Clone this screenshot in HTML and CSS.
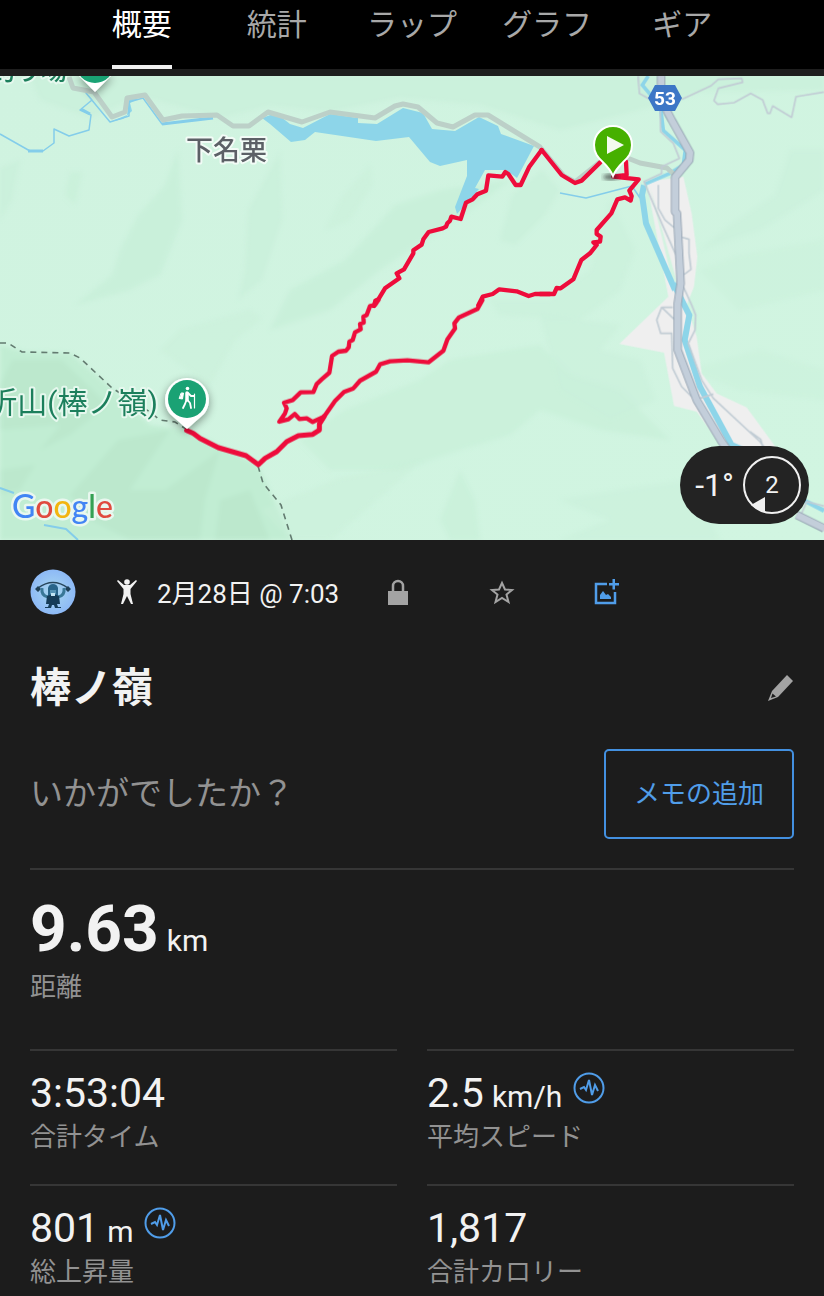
FILE: index.html
```html
<!DOCTYPE html>
<html lang="ja">
<head>
<meta charset="utf-8">
<meta name="viewport" content="width=device-width, initial-scale=1">
<title>棒ノ嶺</title>
<link rel="stylesheet" href="styles.css">
</head>
<body>
<header class="topbar">
  <nav class="tabs">
    <a class="tab tab-active" href="#summary" aria-current="page">概要</a>
    <a class="tab" href="#stats">統計</a>
    <a class="tab" href="#laps">ラップ</a>
    <a class="tab" href="#charts">グラフ</a>
    <a class="tab" href="#gear">ギア</a>
  </nav>
</header>
<main>
  <section class="map">
    <svg class="map-canvas" viewBox="0 76 824 464" preserveAspectRatio="xMidYMid slice">
      <defs>
        <linearGradient id="land" x1="0" y1="0" x2="1" y2="1">
          <stop offset="0" stop-color="#d0f3e0"/><stop offset="1" stop-color="#d1f5e1"/>
        </linearGradient>
        <filter id="soft"><feGaussianBlur stdDeviation="2"/></filter>
        <filter id="drop" x="-30%" y="-30%" width="160%" height="160%"><feDropShadow dx="0" dy="3" stdDeviation="4" flood-opacity=".4"/></filter>
      </defs>
      <rect y="76" width="824" height="464" fill="url(#land)"/>
      <g fill="#c9f0da" filter="url(#soft)">
        <path d="M30 76H824V90L700 92 640 110 560 130 480 105 400 98 330 112 270 106 220 118 140 96 90 118 40 100Z" opacity=".7"/>
        <path d="M178 150 165 185 138 215 120 250 112 275 75 305 130 290 160 275 182 220Z"/>
        <path d="M280 152 248 210 245 270 238 300 262 280 282 220Z" opacity=".7"/>
        <path d="M70 172 65 195 75 205 82 172Z" opacity=".8"/>
        <path d="M0 168 20 160 12 200 0 220Z" opacity=".7"/>
        <path d="M440 190 395 205 345 260 290 290 270 330 330 310 380 270 425 240 470 210 510 180Z"/>
        <path d="M370 165 340 200 325 230 350 220 372 185Z" opacity=".5"/>
        <path d="M542 170 512 195 500 240 515 245 545 215 560 190Z" opacity=".7"/>
        <path d="M610 200 590 270 550 300 490 300 500 315 580 320 620 290 635 250Z" opacity=".6"/>
        <path d="M790 150 775 195 730 225 700 250 760 230 800 205 824 190V150Z" opacity=".6"/>
        <path d="M700 270 740 255 824 240V290L740 310Z" opacity=".4"/>
        <path d="M420 380 450 360 540 345 570 375 620 390 670 440 600 430 540 410 510 435 460 450 400 470 330 470 300 440 345 410Z" opacity=".8"/>
        <path d="M540 315 620 325 600 350 640 360 655 400 610 420 560 390Z" opacity=".6"/>
        <path d="M460 470 440 520 450 540H480L475 500Z" opacity=".8"/>
        <path d="M560 500 620 490 690 480 720 540H560L610 520Z" opacity=".6"/>
        <path d="M690 370 760 350 824 370V400L740 390Z" opacity=".4"/>
        <path d="M180 330 160 350 210 385 235 340 262 318 250 310Z" opacity=".5"/>
      </g>
      <g filter="url(#soft)">
        <path fill="#c1edd3" d="M0 345 25 352 70 353 100 378 150 425 188 430 258 465 292 540H0Z"/>
        <path fill="#b9e6cb" d="M12 360 62 360 108 405 70 435 40 450 60 425 0 430V385ZM70 495 118 440 170 430 130 490 165 490 220 450 205 500 200 540H130L90 520ZM0 470 35 465 20 490 0 495ZM220 500 250 490 270 540H215Z" opacity=".75"/>
        <path fill="#c9efd9" d="M262 510 340 478 420 462 330 540H290Z" opacity=".5"/>
      </g>

      <g transform="translate(540 70) scale(.333333)">
        <path fill="#efefef" d="M320 335 430 320 455 430 472 560 462 650 440 705 470 800 485 910 530 970 620 1012 710 1135 560 1150 470 1025 402 1008 372 848 238 822 385 680Z"/>
        <path fill="#d3f4e1" d="M330 350 412 640 395 625Z"/>
      </g>
      <g fill="#8dd5e9">
        <path d="M262 118 276 113 290 124 303 128 330 114 358 118V123L377 124 403 108 423 113 432 129 455 131 479 117 498 126 501 134 534 146 517 178 506 170 485 170 475 188 479 189 457 214 455 207 467 176V160L440 166 430 162 409 137 376 141 315 132 305 140 291 142 270 124Z"/>
        <path d="M110 122 127 115 129 98 138 99 130 103 132 111 123 119Z"/>
      </g>
      <g fill="none" stroke="#84cdea" stroke-linejoin="round">
        <path d="M0 134 30 151H43L54 143V129L69 136 89 130 91 115 80 110 92 100 86 93 110 122 129 116V102L143 98 162 124 213 118" stroke-width="1.5"/>
        <path d="M162 124 213 118M28 151H43M81 109 90 114" stroke-width="3"/>
        <path d="M560 193 586 198 632 186 640 198" stroke-width="1.5"/>
        <path d="M0 488 14 493M44 525 66 529 78 540" stroke-width="2"/>
      </g>
      <g fill="none" stroke="#8dd5e9" transform="translate(540 70) scale(.333333)">
        <path d="M325 18 307 45 345 90 362 115 370 182 436 240 430 285 390 310 315 342" stroke-width="11"/>
        <path d="M312 345 306 375 318 460 405 660" stroke-width="18"/>
        <path d="M400 640 448 735 434 810 480 950 575 1125 610 1140" stroke-width="18"/>
        <path d="M780 1285 852 1322" stroke-width="13"/>
      </g>
      <path d="M69 77 73 88 94 92 112 117 125 112 127 98 145 95 163 120 182 116 217 115 233 126H249L268 112 302 122 330 112 375 118 395 106 403 104 418 107 437 123 453 127 475 115H488L540 147 564 176 575 182 600 162 620 155 640 163 667 168 677 177" fill="none" stroke="#bcd0c8" stroke-width="5" stroke-linejoin="round"/>
      <g fill="none" stroke="#c1ccd4" transform="translate(540 70) scale(.333333)" stroke-linejoin="round">
        <path d="M295 18 298 70 360 105 362 185 400 220 418 265 365 290V310L312 335 365 460 408 555M355 345V415L375 450 405 475M420 500 447 508V550L453 598 430 615M430 650 455 705 467 735 465 780 445 820 485 930 520 985 660 1115 710 1180M630 1085 662 1108 668 1130M480 985 520 972M405 750 365 712 350 750 362 790H395L398 895 425 950 460 985M368 712H398" stroke-width="5"/>
        <path d="M425 88 512 48 535 28 605 25 608 37 535 55 522 92 533 103 582 98 632 70 668 90 683 130H690L698 108 755 142 768 80 852 66M785 1330 800 1295 852 1308" stroke-width="5"/>
        <path d="M363 18V55C368 100 380 125 395 150L450 248 448 270 405 322V425L411 430 422 640 413 700V840L470 990 545 1115 570 1150M770 1335 852 1375" stroke="#919fae" stroke-width="25"/>
        <path d="M363 15V55C368 100 380 125 395 150L450 248 448 270 405 322V425L411 430 422 640 413 700V840L470 990 545 1115 570 1150M770 1335 855 1376" stroke="#c3ceda" stroke-width="20"/>
      </g>
      <g fill="none" stroke="#637b70" stroke-width="1.6" stroke-dasharray="6 5">
        <path d="M0 343 8 343 22 352 70 353 80 358 112 388 150 412 160 420 175 422 186 429M258 466 263 483 281 505 292 540"/>
      </g>

      <g fill="none" stroke="#ee0c3b" stroke-width="13" stroke-linejoin="round" stroke-linecap="round">
        <g transform="translate(270 70) scale(.333333)">
          <path d="M815 240 778 290 752 345H737L715 312 706 306 697 320 655 316 648 362 622 373 608 388 588 398 572 447 544 440 540 452 532 460 528 470 518 475 476 486 460 508 455 524 430 541V550L402 598 380 610 388 625 345 655 325 688 316 692 312 708M625 706 638 680 668 672 688 658 740 664 776 678 795 672H840"/>
        </g>
        <g transform="translate(540 70) scale(.333333)">
          <path d="M5 240 65 315 105 339 125 332 180 278M258 275 260 315 220 320 296 328 268 362 275 378 272 392 255 382 232 388 214 430 170 480V492L182 500 180 515 160 517 170 525 150 550 124 570 100 628 62 655 50 654 42 672H0"/>
        </g>
        <g transform="translate(270 300) scale(.333333)">
          <path d="M325 0 315 15 300 18 290 45 280 50 281 68 270 72 272 88 255 97 248 120 238 125 236 142 228 152 205 155 186 168 178 218 155 238 140 252 130 276 92 277 68 300 42 308 50 325 45 340 28 365 55 358 74 342 88 357 110 355 128 366 162 350M637 0 622 27 567 52 553 70 555 85 532 118 520 152 475 187 412 181 360 184 330 193 318 215 270 242 250 265 222 276 195 303 162 350 148 372"/>
          <path d="M162 350 148 372V390L128 403 85 407 50 425 20 455-15 475-35 494-72 467-155 443-210 415-230 400-250 391" stroke-width="15"/>
        </g>
      </g>

      <g filter="url(#drop)" fill="#fff">
        <path d="M187 429 170 414A22 22 0 1 1 204 414Z"/>
        <path d="M95 92 77 74H113Z"/>
      </g>
      <circle cx="187" cy="399" r="19" fill="#1aa274"/>
      <circle cx="95" cy="64" r="19" fill="#1aa274"/>
      <g fill="none" stroke="#fff" stroke-linecap="round" stroke-linejoin="round">
        <circle cx="187.500" cy="388.500" r="1.800" fill="#fff" stroke="none"/>
        <path d="M187 393V400" stroke-width="3.500"/>
        <path d="M186.500 400 185 404 183 408M187.500 400 190 403 191 408M188 393 191 396H194" stroke-width="1.800"/>
        <path d="M194.500 394V408" stroke-width="1.200"/>
        <path d="M181.500 393H183.500L182.500 399 179.500 398.500Z" fill="#fff" stroke-width="1"/>
      </g>

      <ellipse cx="611" cy="177" rx="8" ry="3" fill="#222" opacity=".65" filter="url(#soft)"/>
      <path d="M613 176C607 161 594 160 594 145A19 19 0 1 1 632 145C632 160 619 161 613 176Z" fill="#46b000" stroke="#fff" stroke-width="2"/>
      <path d="M607 136 624 145 607 154Z" fill="#f3fbef"/>
      <path d="M648 98 655 85H675L682 98 675 111H655Z" fill="#3c76c6"/>
      <text class="map-route-no" x="665" y="105">53</text>

      <text class="map-town" x="186" y="160">下名栗</text>
      <text class="map-poi" x="158" y="413">折山(棒ノ嶺)</text>
      <text class="map-poi map-poi-small" x="67" y="80">釣り場</text>
      <text class="map-brand" x="12" y="518"><tspan fill="#4285f4">G</tspan><tspan fill="#e04a3f">o</tspan><tspan fill="#f2b50f">o</tspan><tspan fill="#4285f4">g</tspan><tspan fill="#34a053">l</tspan><tspan fill="#e04a3f">e</tspan></text>
    </svg>
    <div class="weather">
      <span class="weather-temp">-1°</span>
      <span class="weather-wind">
        <svg class="weather-ring" viewBox="0 0 60 60"><circle cx="30" cy="30" r="28" fill="none" stroke="#f0f0f0" stroke-width="2"/><path d="M9 50 23 42V57Q15 55 9 50Z" fill="#f0f0f0"/></svg>
        <span>2</span>
      </span>
    </div>
  </section>

  <section class="details" id="summary">
    <div class="meta">
      <svg class="avatar" viewBox="0 0 46 46">
        <defs><radialGradient id="sky"><stop offset="0" stop-color="#a9d8ef"/><stop offset="1" stop-color="#8db9f6"/></radialGradient></defs>
        <circle cx="23" cy="23" r="22.500" fill="url(#sky)"/>
        <path d="M8 19Q23 8 38 19" fill="none" stroke="#27465c" stroke-width="1.500"/>
        <path d="M5 20 8 17 11 20 8 23ZM35 20 38 17 41 20 38 23Z" fill="#1f4058"/>
        <path d="M12 19Q11 27 18 28M34 19Q35 27 28 28" fill="none" stroke="#397797" stroke-width="3"/>
        <path d="M18 27V19Q19 15 23 15T28 19V27Z" fill="#28648a"/>
        <path d="M20 21H26V25H20Z" fill="#5592b4"/>
        <path d="M17 27 20 26H26L29 27 30 35H27L28 38H31V39H25L24 36H22L21 39H15V38H18L19 35H16Z" fill="#163c58"/>
        <path d="M21 24H25V27H21Z" fill="#c2e4f3"/>
      </svg>
      <svg class="person" viewBox="0 0 20 26"><circle cx="10" cy="3" r="2.800" fill="#f2f2f2"/><path d="M0 2 1 1 7 6H13L19 1 20 2 13.500 10V15L16 25H14L10 17 6 25H4L6.500 15V10Z" fill="#f2f2f2"/></svg>
      <time class="date">2月28日 @ 7:03</time>
      <button class="icon-button" type="button" aria-label="プライバシー"><svg class="icon" viewBox="0 0 26 26"><path d="M3 12H23V26H3Z" fill="#a3a3a3"/><path d="M8 12V7A5 5 0 0 1 18 7V12" fill="none" stroke="#a3a3a3" stroke-width="2.500"/></svg></button>
      <button class="icon-button" type="button" aria-label="お気に入り"><svg class="icon" viewBox="0 0 26 26"><path d="M13 4 16 10.500 23 11 17.500 15.500 19.500 23 13 19 6.500 23 8.500 15.500 3 11 10 10.500Z" fill="none" stroke="#a3a3a3" stroke-width="2"/></svg></button>
      <button class="icon-button" type="button" aria-label="写真の追加"><svg class="icon" viewBox="0 0 26 26"><path d="M14 5H3V24H22V13" fill="none" stroke="#509de9" stroke-width="2.500"/><path d="M7 20V16L10 12 13 16 15 15 18 18V20ZM19.500 0H22V4H26V6.500H22V10.500H19.500V6.500H16V4H19.500Z" fill="#509de9"/></svg></button>
    </div>
    <div class="title-row">
      <h1 class="title">棒ノ嶺</h1>
      <button class="edit-button" type="button" aria-label="名前の編集"><svg class="icon" viewBox="0 0 26 26"><path d="M19 0 25 6 10 22 0 26 4 16Z" fill="#a3a3a3"/><path d="M4.500 18.500 8 21.500 3 23Z" fill="#1c1c1c"/></svg></button>
    </div>
    <div class="note-row">
      <p class="prompt">いかがでしたか？</p>
      <button class="note-button" type="button">メモの追加</button>
    </div>
    <div class="distance">
      <p class="value value-large"><span>9.63</span><span class="unit">km</span></p>
      <p class="label">距離</p>
    </div>
    <div class="stats" id="stats">
      <div class="stat">
        <p class="value"><span>3:53:04</span></p>
        <p class="label">合計タイム</p>
      </div>
      <div class="stat">
        <p class="value"><span>2.5</span><span class="unit">km/h</span><svg class="trend" viewBox="0 0 32 32"><circle cx="16" cy="16" r="14.500"/><path d="M7 17 11 15 13 18 16 8 19 23 22 13 25 19"/></svg></p>
        <p class="label">平均スピード</p>
      </div>
      <div class="stat">
        <p class="value"><span>801</span><span class="unit">m</span><svg class="trend" viewBox="0 0 32 32"><circle cx="16" cy="16" r="14.500"/><path d="M7 17 11 15 13 18 16 8 19 23 22 13 25 19"/></svg></p>
        <p class="label">総上昇量</p>
      </div>
      <div class="stat">
        <p class="value"><span>1,817</span></p>
        <p class="label">合計カロリー</p>
      </div>
    </div>
  </section>
</main>
</body>
</html>
```
FILE: styles.css
```css
* { box-sizing: border-box; }
body {
  margin: 0;
  background: #1c1c1c;
  color: #f2f2f2;
  font-family: Roboto, "Noto Sans CJK JP", sans-serif;
}
p, h1 { margin: 0; }
button {
  padding: 0;
  border: 0;
  background: none;
  font-family: inherit;
  cursor: pointer;
}

.topbar {
  background: #000;
  border-bottom: 7px solid #1e1e1e;
}
.tabs {
  display: grid;
  grid-template-columns: repeat(5, 1fr);
  justify-items: center;
  padding: 0 9%;
}
.tab {
  height: 69px;
  border-bottom: 4px solid transparent;
  color: #a8a8a8;
  font-size: 30px;
  line-height: 50px;
  text-decoration: none;
}
.tab-active {
  color: #fff;
  border-bottom-color: #f0f0f0;
}

.map { position: relative; }
.map-canvas {
  display: block;
  width: 100%;
  aspect-ratio: 824 / 464;
}
.map text {
  font-family: Roboto, "Noto Sans CJK JP", sans-serif;
  stroke-linejoin: round;
  paint-order: stroke;
}
.map .map-route-no {
  fill: #fff;
  font-size: 19px;
  font-weight: 700;
  text-anchor: middle;
}
.map .map-town {
  fill: #5c6066;
  stroke: #f2fbf6;
  stroke-width: 4px;
  font-size: 27px;
  font-weight: 500;
}
.map .map-poi {
  fill: #1c7f5c;
  stroke: #e6f8ee;
  stroke-width: 4px;
  font-size: 30px;
  text-anchor: end;
}
.map .map-poi-small { font-size: 26px; font-weight: 500; }
.map .map-brand {
  stroke: #e9f7ef;
  stroke-width: 5px;
  font-family: Lato, sans-serif;
  font-size: 32px;
  font-weight: 500;
}
.weather {
  position: absolute;
  right: 15px;
  bottom: 16px;
  display: flex;
  align-items: center;
  gap: 8px;
  height: 78px;
  padding: 0 7px 0 15px;
  border-radius: 39px;
  background: #232323;
}
.weather-temp { font-size: 32px; }
.weather-wind {
  display: grid;
  place-items: center;
  font-size: 24px;
}
.weather-wind > * { grid-area: 1 / 1; }
.weather-ring { width: 60px; height: 60px; }

.details { padding: 0 30px; }
.meta {
  display: flex;
  align-items: center;
  height: 104px;
}
.avatar { width: 46px; height: 46px; margin-right: 41px; }
.person { width: 20px; height: 26px; margin-right: 20px; }
.date {
  margin-right: 7px;
  padding-bottom: 2px;
  font-size: 26px;
}
.icon-button {
  display: grid;
  place-items: center;
  width: 104px;
  height: 104px;
}
.icon { display: block; width: 26px; height: 26px; }
.title-row {
  display: flex;
  align-items: center;
  justify-content: space-between;
  height: 88px;
}
.title {
  font-size: 41px;
  font-weight: 700;
  line-height: 56px;
}
.edit-button { padding: 8px 0; }
.note-row {
  display: flex;
  align-items: center;
  justify-content: space-between;
  padding: 17px 0 29px;
}
.prompt {
  color: #929292;
  font-size: 33px;
  line-height: 48px;
}
.note-button {
  padding: 24px 28px;
  border: 2px solid #4390e0;
  border-radius: 5px;
  color: #509de9;
  font-size: 26px;
  line-height: 38px;
}
.distance {
  padding: 22px 0 43px;
  border-top: 2px solid #363636;
}
.value {
  display: flex;
  align-items: baseline;
  gap: 8px;
  height: 50px;
  font-size: 41px;
  line-height: 50px;
}
.value-large {
  height: 76px;
  font-size: 64px;
  font-weight: 700;
  line-height: 76px;
}
.unit {
  font-size: 30px;
  font-weight: 400;
}
.label {
  color: #929292;
  font-size: 26px;
  line-height: 38px;
}
.stats {
  display: grid;
  grid-template-columns: 1fr 1fr;
  column-gap: 30px;
}
.stat {
  padding: 17px 0 28px;
  border-top: 2px solid #363636;
}
.stat:nth-last-child(-n+2) { padding-bottom: 4px; }
.trend {
  align-self: flex-start;
  width: 32px;
  height: 32px;
  margin: 4px 0 0 3px;
  fill: none;
  stroke: #509de9;
  stroke-width: 2;
}
```
